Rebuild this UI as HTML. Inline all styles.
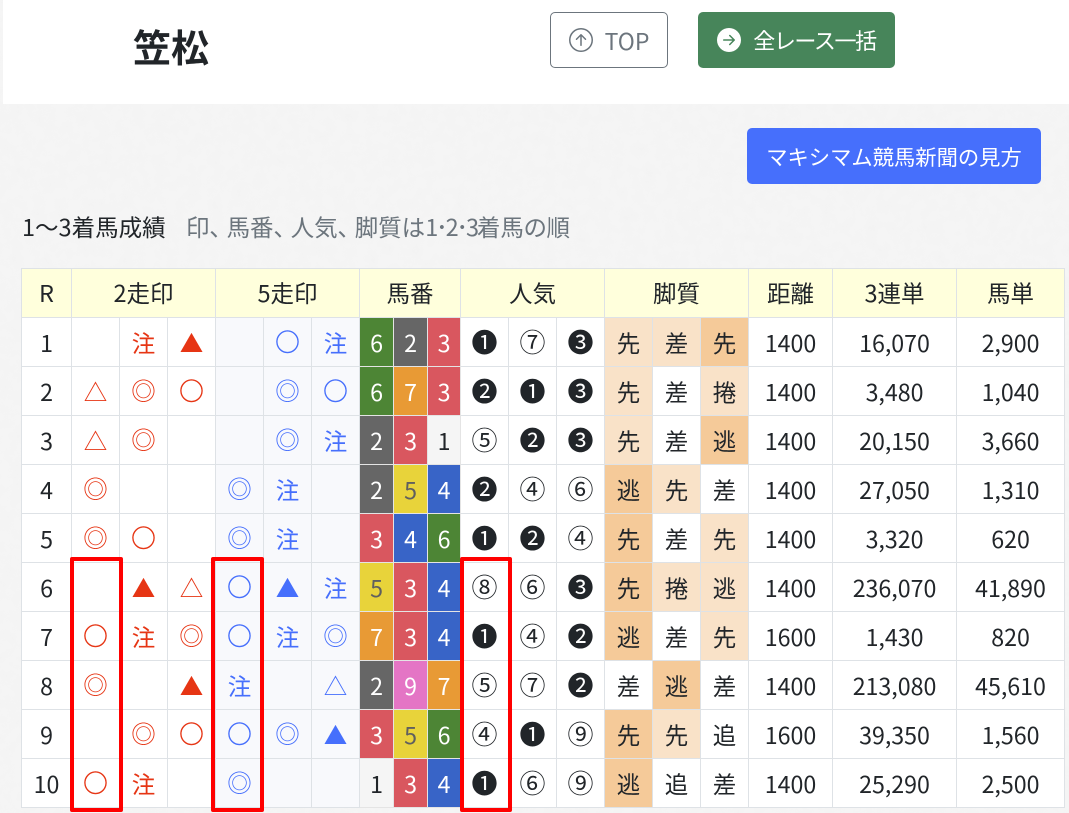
<!DOCTYPE html>
<html lang="ja"><head><meta charset="utf-8"><title>笠松</title>
<style>
*{box-sizing:border-box}
html,body{margin:0;padding:0}
body{width:1069px;height:813px;position:relative;overflow:hidden;background:#f5f5f5;color:#212529;font-family:"Noto Sans CJK JP","Liberation Sans",sans-serif}
.tex{position:absolute;left:0;top:0}
.top{position:absolute;left:3px;top:0;width:1066px;height:104px;background:#fff}
.abs{position:absolute;white-space:nowrap;line-height:1}
.btn{position:absolute;border-radius:5px;display:flex;align-items:center;justify-content:center;white-space:nowrap}
table{position:absolute;left:21px;top:268px;width:1043px;border-collapse:collapse;table-layout:fixed;background:#fff;font-size:23.5px}
td,th{border:1px solid #dee2e6;height:49px;padding:0;text-align:center;vertical-align:middle;font-weight:400;line-height:1;overflow:hidden}
td{padding-top:1px}
td:nth-child(1),td:nth-child(17),td:nth-child(18),td:nth-child(19),td.n{font-size:23.2px}
td:nth-child(11),td:nth-child(12),td:nth-child(13){font-size:26px;padding:0}
th{background:#ffffdc}
.r{color:#e63514}.b{color:#466ffc}
td.o{font-size:24.5px;padding:0}
td.s{-webkit-text-stroke:.45px currentColor}
.f{background:#f8f9fc}
.n{color:#fff;border-color:#e4e4e4}
.c1{background:#f5f5f5;color:#212529}.c2{background:#666}.c3{background:#d9575f}.c4{background:#3864c7}.c5{background:#e8d33a;color:#5f5f5f}.c6{background:#4d8535}.c7{background:#e89a35}.c9{background:#e475c5}
.l{background:#f9e2c8}.d{background:#f5ca99}
.box{position:absolute;top:557px;height:255px;border:4px solid #f00;border-radius:2px}
.p{letter-spacing:5.300px}.m{letter-spacing:-2.200px}
</style></head><body>
<svg class="tex" width="1069" height="813"><filter id="n"><feTurbulence type="fractalNoise" baseFrequency=".09" numOctaves="3" seed="4"/><feColorMatrix values="0 0 0 0 .5 0 0 0 0 .5 0 0 0 0 .5 .5 0 0 0 -.2"/></filter><rect width="1069" height="813" filter="url(#n)" opacity=".14"/></svg>
<div class="top"></div>
<div class="abs" style="left:133px;top:27px;font-size:38px;font-weight:700">笠松</div>
<div class="btn" style="left:550px;top:12px;width:118px;height:56px;background:#fff;border:1px solid #6c757d;color:#6c757d;font-size:23px">
<svg width="24" height="24" viewBox="0 0 16 16" fill="#6c757d" style="margin-right:12px"><path d="M1 8a7 7 0 1 0 14 0A7 7 0 0 0 1 8zm15 0A8 8 0 1 1 0 8a8 8 0 0 1 16 0zm-7.500 3.500a.5.5 0 0 1-1 0V5.707L5.354 7.854a.5.5 0 1 1-.708-.708l3-3a.5.5 0 0 1 .708 0l3 3a.5.5 0 0 1-.708.708L8.500 5.707V11.500z"/></svg>TOP</div>
<div class="btn" style="left:698px;top:12px;width:197px;height:56px;background:#47855a;color:#fff;font-size:22px;letter-spacing:-1.4px">
<svg width="24" height="24" viewBox="0 0 16 16" fill="#fff" style="margin-right:12px"><path d="M8 0a8 8 0 1 1 0 16A8 8 0 0 1 8 0zM4.500 7.500a.5.5 0 0 0 0 1h5.793l-2.147 2.146a.5.5 0 0 0 .708.708l3-3a.5.5 0 0 0 0-.708l-3-3a.5.5 0 1 0-.708.708L10.293 7.500H4.500z"/></svg>全レース一括</div>
<div class="btn" style="left:747px;top:128px;width:294px;height:56px;background:#466ffc;color:#fff;font-size:21.3px">マキシマム競馬新聞の見方</div>
<div class="abs" style="left:22px;top:215px;font-size:23.5px">1〜3着馬成績</div>
<div class="abs" style="left:186px;top:215px;font-size:23.5px;color:#6c757d;font-feature-settings:'palt'">印<span class="p">、</span>馬番<span class="p">、</span>人気<span class="p">、</span>脚質は<span class="m">1･2･3</span>着馬の順</div>
<table>
<colgroup><col style="width:50px"><col style="width:48px"><col style="width:48px"><col style="width:48px"><col style="width:48px"><col style="width:48px"><col style="width:48px"><col style="width:34px"><col style="width:34px"><col style="width:33px"><col style="width:48px"><col style="width:48px"><col style="width:48px"><col style="width:48px"><col style="width:48px"><col style="width:48px"><col style="width:84px"><col style="width:124px"><col style="width:108px"></colgroup>
<tr><th>R</th><th colspan="3">2走印</th><th colspan="3">5走印</th><th colspan="3">馬番</th><th colspan="3">人気</th><th colspan="3">脚質</th><th>距離</th><th>3連単</th><th>馬単</th></tr>
<tr><td>1</td><td class="r"></td><td class="r">注</td><td class="r">▲</td><td class="b f"></td><td class="b f o s">○</td><td class="b f">注</td><td class="n c6">6</td><td class="n c2">2</td><td class="n c3">3</td><td>❶</td><td>⑦</td><td>❸</td><td class="l">先</td><td class="l">差</td><td class="d">先</td><td>1400</td><td>16,070</td><td>2,900</td></tr>
<tr><td>2</td><td class="r">△</td><td class="r o">◎</td><td class="r o s">○</td><td class="b f"></td><td class="b f o">◎</td><td class="b f o s">○</td><td class="n c6">6</td><td class="n c7">7</td><td class="n c3">3</td><td>❷</td><td>❶</td><td>❸</td><td class="l">先</td><td>差</td><td class="l">捲</td><td>1400</td><td>3,480</td><td>1,040</td></tr>
<tr><td>3</td><td class="r">△</td><td class="r o">◎</td><td class="r"></td><td class="b f"></td><td class="b f o">◎</td><td class="b f">注</td><td class="n c2">2</td><td class="n c3">3</td><td class="n c1">1</td><td>⑤</td><td>❷</td><td>❸</td><td class="l">先</td><td>差</td><td class="d">逃</td><td>1400</td><td>20,150</td><td>3,660</td></tr>
<tr><td>4</td><td class="r o">◎</td><td class="r"></td><td class="r"></td><td class="b f o">◎</td><td class="b f">注</td><td class="b f"></td><td class="n c2">2</td><td class="n c5">5</td><td class="n c4">4</td><td>❷</td><td>④</td><td>⑥</td><td class="d">逃</td><td class="l">先</td><td>差</td><td>1400</td><td>27,050</td><td>1,310</td></tr>
<tr><td>5</td><td class="r o">◎</td><td class="r o s">○</td><td class="r"></td><td class="b f o">◎</td><td class="b f">注</td><td class="b f"></td><td class="n c3">3</td><td class="n c4">4</td><td class="n c6">6</td><td>❶</td><td>❷</td><td>④</td><td class="d">先</td><td>差</td><td class="l">先</td><td>1400</td><td>3,320</td><td>620</td></tr>
<tr><td>6</td><td class="r"></td><td class="r">▲</td><td class="r">△</td><td class="b f o s">○</td><td class="b f">▲</td><td class="b f">注</td><td class="n c5">5</td><td class="n c3">3</td><td class="n c4">4</td><td>⑧</td><td>⑥</td><td>❸</td><td class="d">先</td><td class="l">捲</td><td class="l">逃</td><td>1400</td><td>236,070</td><td>41,890</td></tr>
<tr><td>7</td><td class="r o s">○</td><td class="r">注</td><td class="r o">◎</td><td class="b f o s">○</td><td class="b f">注</td><td class="b f o">◎</td><td class="n c7">7</td><td class="n c3">3</td><td class="n c4">4</td><td>❶</td><td>④</td><td>❷</td><td class="d">逃</td><td>差</td><td class="l">先</td><td>1600</td><td>1,430</td><td>820</td></tr>
<tr><td>8</td><td class="r o">◎</td><td class="r"></td><td class="r">▲</td><td class="b f">注</td><td class="b f"></td><td class="b f">△</td><td class="n c2">2</td><td class="n c9">9</td><td class="n c7">7</td><td>⑤</td><td>⑦</td><td>❷</td><td>差</td><td class="d">逃</td><td>差</td><td>1400</td><td>213,080</td><td>45,610</td></tr>
<tr><td>9</td><td class="r"></td><td class="r o">◎</td><td class="r o s">○</td><td class="b f o s">○</td><td class="b f o">◎</td><td class="b f">▲</td><td class="n c3">3</td><td class="n c5">5</td><td class="n c6">6</td><td>④</td><td>❶</td><td>⑨</td><td class="d">先</td><td class="l">先</td><td>追</td><td>1600</td><td>39,350</td><td>1,560</td></tr>
<tr><td>10</td><td class="r o s">○</td><td class="r">注</td><td class="r"></td><td class="b f o">◎</td><td class="b f"></td><td class="b f"></td><td class="n c1">1</td><td class="n c3">3</td><td class="n c4">4</td><td>❶</td><td>⑥</td><td>⑨</td><td class="d">逃</td><td>追</td><td>差</td><td>1400</td><td>25,290</td><td>2,500</td></tr>
</table>
<div class="box" style="left:70px;width:53px"></div>
<div class="box" style="left:211px;width:53px"></div>
<div class="box" style="left:460px;width:52px"></div>
</body></html>
